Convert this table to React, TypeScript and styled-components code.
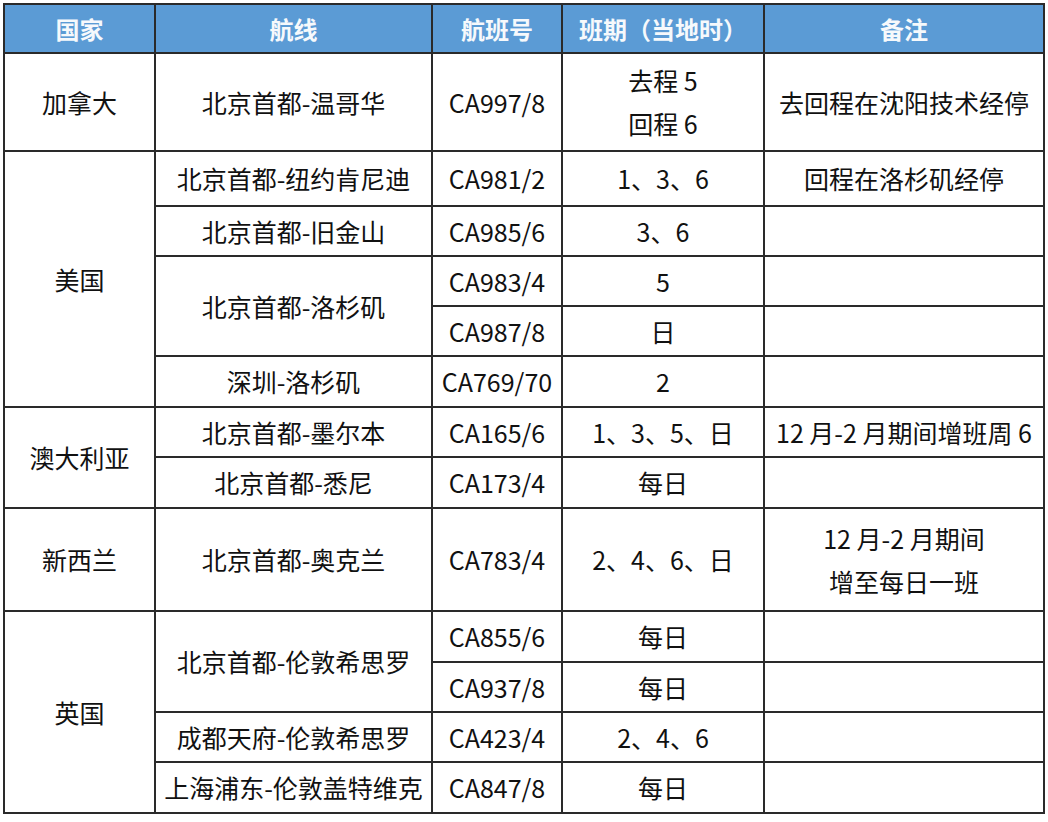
import React from "react";
import styled, { createGlobalStyle } from "styled-components";

const GlobalStyle = createGlobalStyle`
  html, body {
    margin: 0;
    padding: 0;
    background: #ffffff;
  }
  body {
    font-family: "Noto Sans CJK SC", "Noto Sans", sans-serif;
  }
`;

const Page = styled.div`
  padding: 3px 0 0 3px;
`;

const Table = styled.table`
  width: 1042px;
  box-sizing: border-box;
  table-layout: fixed;
  border-collapse: separate;
  border-spacing: 0;
  border-left: 2px solid #2a2a2a;
  border-top: 2px solid #2a2a2a;
  font-family: "Noto Sans CJK SC", "Noto Sans", sans-serif;
  font-size: 25px;
  color: #111111;
`;

const Col = styled.col<{ $w: number }>`
  width: ${(p) => p.$w}px;
`;

const Row = styled.tr<{ $h: number }>`
  height: ${(p) => p.$h}px;
`;

const HeadCell = styled.th`
  background: #5b9bd5;
  color: #f6f9fc;
  font-weight: 700;
  font-size: 24px;
  line-height: 30px;
  text-align: center;
  vertical-align: middle;
  padding: 0;
  border-right: 2px solid #2a2a2a;
  border-bottom: 2px solid #2a2a2a;
  white-space: nowrap;
`;

const Cell = styled.td`
  text-align: center;
  vertical-align: middle;
  padding: 0;
  line-height: 43px;
  border-right: 2px solid #2a2a2a;
  border-bottom: 2px solid #2a2a2a;
  white-space: nowrap;
`;

type Line = { cells: { text: React.ReactNode; rowSpan?: number }[]; h: number };

const rows: Line[] = [
  {
    h: 98,
    cells: [
      { text: "加拿大" },
      { text: "北京首都-温哥华" },
      { text: "CA997/8" },
      { text: <>去程 5<br />回程 6</> },
      { text: "去回程在沈阳技术经停" },
    ],
  },
  {
    h: 55,
    cells: [
      { text: "美国", rowSpan: 5 },
      { text: "北京首都-纽约肯尼迪" },
      { text: "CA981/2" },
      { text: "1、3、6" },
      { text: "回程在洛杉矶经停" },
    ],
  },
  {
    h: 50,
    cells: [
      { text: "北京首都-旧金山" },
      { text: "CA985/6" },
      { text: "3、6" },
      { text: "" },
    ],
  },
  {
    h: 50,
    cells: [
      { text: "北京首都-洛杉矶", rowSpan: 2 },
      { text: "CA983/4" },
      { text: "5" },
      { text: "" },
    ],
  },
  {
    h: 50,
    cells: [{ text: "CA987/8" }, { text: "日" }, { text: "" }],
  },
  {
    h: 51,
    cells: [
      { text: "深圳-洛杉矶" },
      { text: "CA769/70" },
      { text: "2" },
      { text: "" },
    ],
  },
  {
    h: 50,
    cells: [
      { text: "澳大利亚", rowSpan: 2 },
      { text: "北京首都-墨尔本" },
      { text: "CA165/6" },
      { text: "1、3、5、日" },
      { text: "12 月-2 月期间增班周 6" },
    ],
  },
  {
    h: 51,
    cells: [
      { text: "北京首都-悉尼" },
      { text: "CA173/4" },
      { text: "每日" },
      { text: "" },
    ],
  },
  {
    h: 103,
    cells: [
      { text: "新西兰" },
      { text: "北京首都-奥克兰" },
      { text: "CA783/4" },
      { text: "2、4、6、日" },
      { text: <>12 月-2 月期间<br />增至每日一班</> },
    ],
  },
  {
    h: 51,
    cells: [
      { text: "英国", rowSpan: 4 },
      { text: "北京首都-伦敦希思罗", rowSpan: 2 },
      { text: "CA855/6" },
      { text: "每日" },
      { text: "" },
    ],
  },
  {
    h: 50,
    cells: [{ text: "CA937/8" }, { text: "每日" }, { text: "" }],
  },
  {
    h: 50,
    cells: [
      { text: "成都天府-伦敦希思罗" },
      { text: "CA423/4" },
      { text: "2、4、6" },
      { text: "" },
    ],
  },
  {
    h: 51,
    cells: [
      { text: "上海浦东-伦敦盖特维克" },
      { text: "CA847/8" },
      { text: "每日" },
      { text: "" },
    ],
  },
];

export default function App() {
  return (
    <Page>
      <GlobalStyle />
      <Table>
        <colgroup>
          <Col $w={151} />
          <Col $w={277} />
          <Col $w={130} />
          <Col $w={202} />
          <Col $w={280} />
        </colgroup>
        <thead>
          <Row $h={49}>
            <HeadCell>国家</HeadCell>
            <HeadCell>航线</HeadCell>
            <HeadCell>航班号</HeadCell>
            <HeadCell>班期（当地时）</HeadCell>
            <HeadCell>备注</HeadCell>
          </Row>
        </thead>
        <tbody>
          {rows.map((r, i) => (
            <Row key={i} $h={r.h}>
              {r.cells.map((c, j) => (
                <Cell key={j} rowSpan={c.rowSpan}>
                  {c.text}
                </Cell>
              ))}
            </Row>
          ))}
        </tbody>
      </Table>
    </Page>
  );
}
